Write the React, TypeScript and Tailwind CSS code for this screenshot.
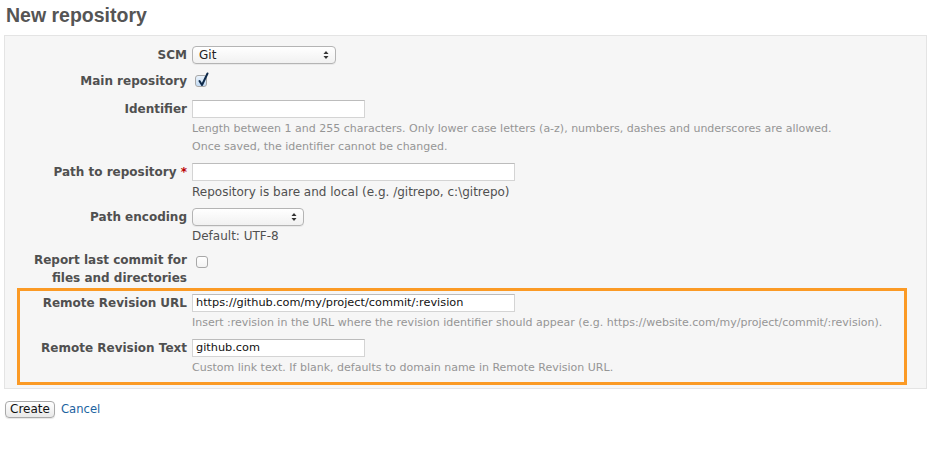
import React from "react";

const font = { fontFamily: '"DejaVu Sans", Verdana, sans-serif' };
const titleFont = { fontFamily: '"Liberation Sans", Arial, sans-serif' };

function SelectBox({ width, value }: { width: string; value?: string }) {
  return (
    <div
      className={`${width} h-[18px] flex items-center justify-between rounded-[4px] border border-[#b4b4b4] bg-gradient-to-b from-white to-[#f1f1f1] pl-[6px] pr-[6px] text-[12px] leading-none text-[#222] shadow-[0_1px_0_rgba(0,0,0,0.05)]`}
    >
      <span>{value ?? ""}</span>
      <svg width="6" height="10" viewBox="0 0 6 10">
        <path d="M0.5 4 L3 1 L5.5 4 Z" fill="#333" />
        <path d="M0.5 6 L3 9 L5.5 6 Z" fill="#333" />
      </svg>
    </div>
  );
}

function CheckBox({ checked }: { checked?: boolean }) {
  return (
    <div
      className={`relative w-[12px] h-[12px] rounded-[3px] border border-[#a8a8a8] bg-gradient-to-b ${
        checked ? "from-[#eaf3fc] to-[#c3dbf3] border-[#8ea7c2]" : "from-white to-[#f3f3f3]"
      }`}
    >
      {checked && (
        <svg
          className="absolute left-[1px] top-[-4px]"
          width="13"
          height="15"
          viewBox="0 0 13 15"
        >
          <path
            d="M2.5 9 L5 13 L10.5 1.5"
            stroke="#0f2a4a"
            strokeWidth="2"
            fill="none"
            strokeLinecap="round"
            strokeLinejoin="round"
          />
        </svg>
      )}
    </div>
  );
}

function TextInput({ width, value }: { width: string; value?: string }) {
  return (
    <div
      className={`${width} h-[18px] border border-[#d4d4d4] border-t-[#bcbcbc] bg-white pl-[3px] text-[11.3px] leading-[16px] text-[#111]`}
    >
      {value ?? ""}
    </div>
  );
}

function Label({ children, w }: { children: React.ReactNode; w: string }) {
  return (
    <div
      className={`${w} shrink-0 pr-[5px] text-right text-[12px] font-bold leading-[18px] text-[#505050]`}
    >
      {children}
    </div>
  );
}

export default function App() {
  return (
    <div style={font} className="bg-white w-[927px] h-[458px] overflow-hidden">
      <h2
        style={titleFont}
        className="pl-[6px] pt-[2px] text-[19.5px] font-bold leading-[26px] text-[#555]"
      >
        New repository
      </h2>
      <div className="mt-[7px] ml-[4px] w-[923px] h-[354px] border border-[#e4e4e4] bg-[#f6f6f6]">
        {/* SCM */}
        <div className="flex mt-[10px]">
          <Label w="w-[187px]">SCM</Label>
          <SelectBox width="w-[144px]" value="Git" />
        </div>
        {/* Main repository */}
        <div className="flex mt-[8px]">
          <Label w="w-[187px]">Main repository</Label>
          <div className="pt-[3px] pl-[3px]">
            <CheckBox checked />
          </div>
        </div>
        {/* Identifier */}
        <div className="flex mt-[10px]">
          <Label w="w-[187px]">Identifier</Label>
          <div>
            <TextInput width="w-[173px]" />
            <div className="mt-[2px] text-[11px] leading-[18px] text-[#959595]">
              Length between 1 and 255 characters. Only lower case letters (a-z), numbers, dashes and
              underscores are allowed.
              <br />
              Once saved, the identifier cannot be changed.
            </div>
          </div>
        </div>
        {/* Path */}
        <div className="flex mt-[7px]">
          <Label w="w-[187px]">
            Path to repository <span className="text-[#bb0000]">*</span>
          </Label>
          <div>
            <TextInput width="w-[323px]" />
            <div className="mt-[2px] text-[12px] leading-[18px] text-[#505050]">
              Repository is bare and local (e.g. /gitrepo, c:\gitrepo)
            </div>
          </div>
        </div>
        {/* Path encoding */}
        <div className="flex mt-[7px]">
          <Label w="w-[187px]">Path encoding</Label>
          <div>
            <SelectBox width="w-[112px]" />
            <div className="mt-[1px] text-[12px] leading-[18px] text-[#505050]">
              Default: UTF-8
            </div>
          </div>
        </div>
        {/* Report last commit */}
        <div className="flex mt-[6px]">
          <Label w="w-[187px]">
            Report last commit for
            <br />
            files and directories
          </Label>
          <div className="pt-[5px] pl-[4px]">
            <CheckBox />
          </div>
        </div>
        {/* Orange box */}
        <div className="ml-[12px] mt-[1px] w-[890px] h-[97px] border-[3px] border-[#fb9a25]">
          <div className="flex mt-[3px]">
            <Label w="w-[172px]">Remote Revision URL</Label>
            <div>
              <TextInput width="w-[323px]" value="https://github.com/my/project/commit/:revision" />
              <div className="mt-[3px] text-[11px] leading-[16px] text-[#959595]">
                Insert :revision in the URL where the revision identifier should appear (e.g.
                https://website.com/my/project/commit/:revision).
              </div>
            </div>
          </div>
          <div className="flex mt-[8px]">
            <Label w="w-[172px]">Remote Revision Text</Label>
            <div>
              <TextInput width="w-[173px]" value="github.com" />
              <div className="mt-[3px] text-[11px] leading-[16px] text-[#959595]">
                Custom link text. If blank, defaults to domain name in Remote Revision URL.
              </div>
            </div>
          </div>
        </div>
      </div>
      <div className="flex items-center mt-[12px] pl-[5px]">
        <button className="h-[17px] w-[50px] rounded-[4px] border border-[#a9a9a9] bg-gradient-to-b from-white to-[#e9e9e9] text-[12px] leading-[15px] text-[#111] shadow-[0_1px_1px_rgba(0,0,0,0.1)]">
          Create
        </button>
        <a className="ml-[6px] text-[11.6px] text-[#1b62a0]" href="#">
          Cancel
        </a>
      </div>
    </div>
  );
}
